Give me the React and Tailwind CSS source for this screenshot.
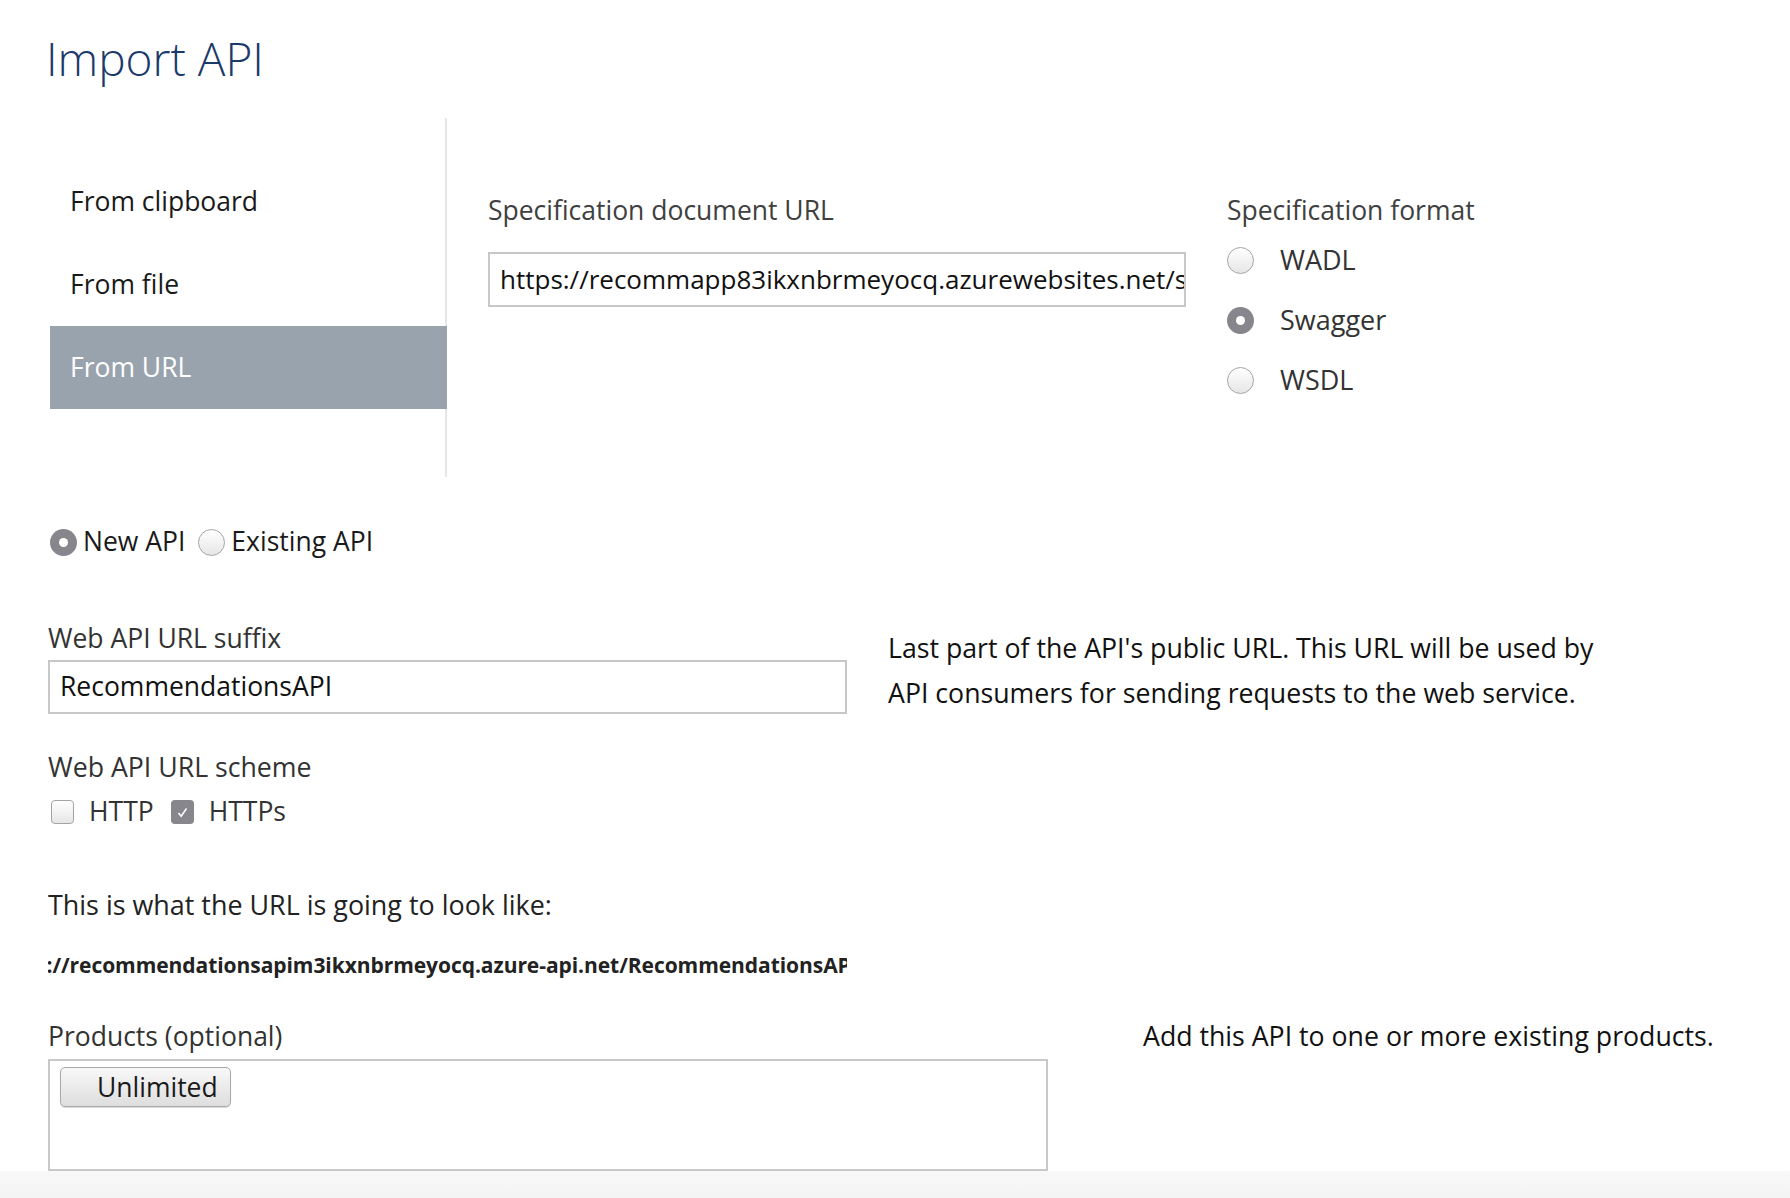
import React from "react";

function Radio({ checked }) {
  if (checked) {
    return (
      <span className="w-[27px] h-[27px] rounded-full bg-[#86868c] flex items-center justify-center shrink-0">
        <span className="w-[9px] h-[9px] rounded-full bg-white" />
      </span>
    );
  }
  return (
    <span className="w-[27px] h-[27px] rounded-full border border-[#a4a4a4] bg-gradient-to-b from-white to-[#e6e6e6] shrink-0" />
  );
}

function Checkbox({ checked }) {
  if (checked) {
    return (
      <span className="w-[23px] h-[24px] rounded-[4px] bg-[#86868c] flex items-center justify-center shrink-0">
        <svg width="13" height="13" viewBox="0 0 13 13">
          <path d="M2.5 7 L5.2 10.2 L10.5 2.5" fill="none" stroke="#fff" strokeWidth="1.6" />
        </svg>
      </span>
    );
  }
  return (
    <span className="w-[23px] h-[24px] rounded-[4px] border border-[#a4a4a4] bg-gradient-to-b from-white to-[#e6e6e6] shrink-0" />
  );
}

export default function App() {
  return (
    <div className="w-[1790px] h-[1198px] bg-white flex flex-col font-['Open_Sans',sans-serif] overflow-hidden">
      {/* Title */}
      <h1 className="shrink-0 pl-[46px] pt-[28px] text-[46px] leading-[60px] font-light text-[#1b3a6b]">
        Import API
      </h1>

      {/* Source + spec */}
      <div className="shrink-0 flex mt-[30px]">
        <div className="ml-[50px] w-[397px] h-[359px] border-r-2 border-[#e6e6e6] pt-[42px]">
          <div className="h-[83px] flex items-center pl-[20px] text-[26.5px] text-[#1a1a1a]">From clipboard</div>
          <div className="h-[83px] flex items-center pl-[20px] text-[26.5px] text-[#1a1a1a]">From file</div>
          <div className="h-[83px] flex items-center pl-[20px] text-[26.5px] text-white bg-[#99a3ae] -mr-[2px]">From URL</div>
        </div>

        <div className="pl-[41px] pt-[72px] w-[780px]">
          <div className="text-[26.5px] leading-[40px] text-[#404040]">Specification document URL</div>
          <div className="mt-[22px] w-[698px] h-[55px] border-2 border-[#c8c8c8] flex items-center pl-[10px] overflow-hidden">
            <span className="text-[26px] text-[#111] whitespace-nowrap">
              https://recommapp83ikxnbrmeyocq.azurewebsites.net/swagger
            </span>
          </div>
        </div>

        <div className="pt-[72px]">
          <div className="text-[26.5px] leading-[40px] text-[#404040]">Specification format</div>
          <div className="flex flex-col">
            {[
              ["WADL", false],
              ["Swagger", true],
              ["WSDL", false],
            ].map(([label, on]) => (
              <div key={label} className="h-[60px] flex items-center gap-[26px]">
                <Radio checked={on} />
                <span className="text-[27px] text-[#333]">{label}</span>
              </div>
            ))}
          </div>
        </div>
      </div>

      {/* New / existing */}
      <div className="shrink-0 flex items-center mt-[45px] ml-[50px] h-[40px] text-[26.5px] text-[#1a1a1a]">
        <Radio checked />
        <span className="ml-[6px] mr-[13px]">New API</span>
        <Radio />
        <span className="ml-[6px]">Existing API</span>
      </div>

      {/* URL suffix */}
      <div className="shrink-0 flex mt-[56px] ml-[48px]">
        <div className="w-[799px]">
          <div className="text-[26.5px] leading-[40px] text-[#333]">Web API URL suffix</div>
          <div className="mt-[2px] h-[54px] border-2 border-[#c8c8c8] flex items-center pl-[10px]">
            <span className="text-[26.5px] text-[#111]">RecommendationsAPI</span>
          </div>
        </div>
        <div className="ml-[41px] mt-[7px] text-[26.7px] leading-[45px] text-[#111] w-[760px]">
          Last part of the API's public URL. This URL will be used by
          <br />
          API consumers for sending requests to the web service.
        </div>
      </div>

      {/* Scheme */}
      <div className="shrink-0 ml-[48px] mt-[32px] text-[26.7px] leading-[40px] text-[#333]">Web API URL scheme</div>
      <div className="shrink-0 ml-[51px] mt-[5px] flex items-center h-[40px] text-[26.5px] text-[#333]">
        <Checkbox />
        <span className="ml-[15px] mr-[17px]">HTTP</span>
        <Checkbox checked />
        <span className="ml-[15px]">HTTPs</span>
      </div>

      {/* Preview */}
      <div className="shrink-0 ml-[48px] mt-[53px] text-[26.9px] leading-[40px] text-[#222]">
        This is what the URL is going to look like:
      </div>
      <div className="shrink-0 ml-[48px] mt-[25px] w-[799px] h-[30px] overflow-hidden whitespace-nowrap text-[21px] leading-[30px] font-bold tracking-[-0.06px] text-[#222]">
        <span className="inline-block -ml-[57px]">
          https://recommendationsapim3ikxnbrmeyocq.azure-api.net/RecommendationsAPI
        </span>
      </div>

      {/* Products */}
      <div className="shrink-0 flex mt-[36px] ml-[48px]">
        <div className="w-[1000px]">
          <div className="text-[26.5px] leading-[40px] text-[#333]">Products (optional)</div>
          <div className="mt-[3px] h-[112px] border-2 border-[#c8c8c8] pt-[6px] pl-[10px]">
            <button className="h-[40px] pl-[36px] pr-[12px] rounded-[5px] border border-[#a9a9a9] bg-gradient-to-b from-[#f8f8f8] to-[#dedede] shadow-[0_1px_1px_rgba(0,0,0,0.15)] text-[26.5px] text-[#1a1a1a] leading-none">
              Unlimited
            </button>
          </div>
        </div>
        <div className="ml-[95px] text-[26.7px] leading-[40px] text-[#111]">
          Add this API to one or more existing products.
        </div>
      </div>

      <div className="mt-auto h-[32px] shrink-0 bg-gradient-to-b from-[#f8f8f8] to-[#f3f3f3]" />
    </div>
  );
}
